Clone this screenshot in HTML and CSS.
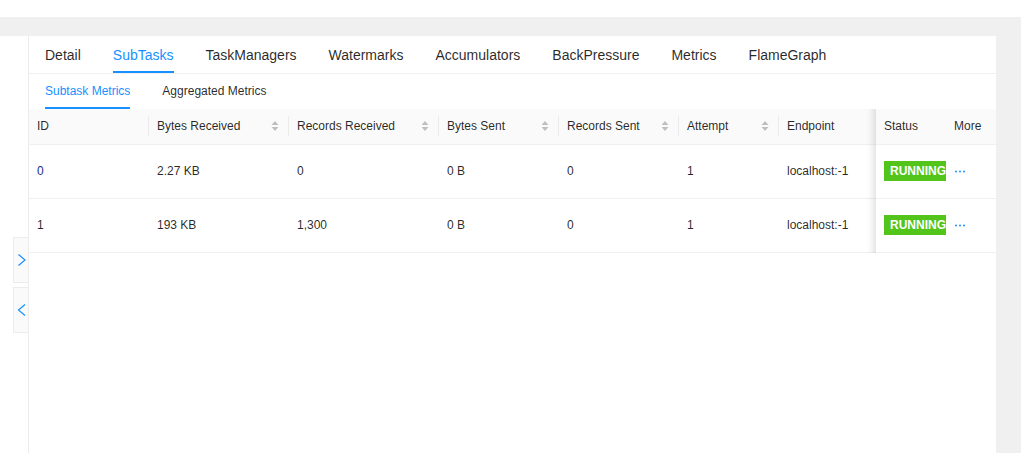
FILE: index.html
```html
<!DOCTYPE html>
<html>
<head>
<meta charset="utf-8">
<link rel="stylesheet" href="styles.css">
</head>
<body>
<div class="top"></div>
<div class="layout">
  <aside class="sider">
    <div class="sider-btns">
      <button class="collapse-btn" type="button">
        <svg width="10" height="14" viewBox="0 0 10 14"><path d="M1.5 1.5 L8 7 L1.5 12.5" fill="none" stroke="#1890ff" stroke-width="1.2"/></svg>
      </button>
      <button class="collapse-btn" type="button">
        <svg width="10" height="14" viewBox="0 0 10 14"><path d="M8 1.5 L1.5 7 L8 12.5" fill="none" stroke="#1890ff" stroke-width="1.2"/></svg>
      </button>
    </div>
  </aside>
  <main class="panel">
    <nav class="tabs">
      <span class="tab">Detail</span>
      <span class="tab active">SubTasks</span>
      <span class="tab">TaskManagers</span>
      <span class="tab">Watermarks</span>
      <span class="tab">Accumulators</span>
      <span class="tab">BackPressure</span>
      <span class="tab">Metrics</span>
      <span class="tab">FlameGraph</span>
    </nav>
    <nav class="subtabs">
      <span class="subtab active">Subtask Metrics</span>
      <span class="subtab">Aggregated Metrics</span>
    </nav>
    <table class="grid">
      <colgroup>
        <col class="w120"><col class="w140"><col class="w150"><col class="w120"><col class="w120"><col class="w100"><col class="w97"><col class="w70"><col class="w50">
      </colgroup>
      <thead>
        <tr>
          <th class="sep">ID</th>
          <th class="sep"><div class="sorter"><span>Bytes Received</span><svg class="caret" width="10" height="12" viewBox="0 0 10 12"><path d="M1.5 5 L5 1 L8.5 5 Z M1.5 7 L5 11 L8.5 7 Z" fill="#bfbfbf"/></svg></div></th>
          <th class="sep"><div class="sorter"><span>Records Received</span><svg class="caret" width="10" height="12" viewBox="0 0 10 12"><path d="M1.5 5 L5 1 L8.5 5 Z M1.5 7 L5 11 L8.5 7 Z" fill="#bfbfbf"/></svg></div></th>
          <th class="sep"><div class="sorter"><span>Bytes Sent</span><svg class="caret" width="10" height="12" viewBox="0 0 10 12"><path d="M1.5 5 L5 1 L8.5 5 Z M1.5 7 L5 11 L8.5 7 Z" fill="#bfbfbf"/></svg></div></th>
          <th class="sep"><div class="sorter"><span>Records Sent</span><svg class="caret" width="10" height="12" viewBox="0 0 10 12"><path d="M1.5 5 L5 1 L8.5 5 Z M1.5 7 L5 11 L8.5 7 Z" fill="#bfbfbf"/></svg></div></th>
          <th class="sep"><div class="sorter"><span>Attempt</span><svg class="caret" width="10" height="12" viewBox="0 0 10 12"><path d="M1.5 5 L5 1 L8.5 5 Z M1.5 7 L5 11 L8.5 7 Z" fill="#bfbfbf"/></svg></div></th>
          <th>Endpoint</th>
          <th class="fixed">Status</th>
          <th>More</th>
        </tr>
      </thead>
      <tbody>
        <tr>
          <td><a class="link">0</a></td>
          <td>2.27 KB</td>
          <td>0</td>
          <td>0 B</td>
          <td>0</td>
          <td>1</td>
          <td>localhost:-1</td>
          <td class="fixed"><span class="tag">RUNNING</span></td>
          <td><svg class="more" width="10" height="3" viewBox="0 0 10 3"><circle cx="1" cy="1.5" r="1" fill="#1890ff"/><circle cx="5" cy="1.5" r="1" fill="#1890ff"/><circle cx="9" cy="1.5" r="1" fill="#1890ff"/></svg></td>
        </tr>
        <tr>
          <td>1</td>
          <td>193 KB</td>
          <td>1,300</td>
          <td>0 B</td>
          <td>0</td>
          <td>1</td>
          <td>localhost:-1</td>
          <td class="fixed"><span class="tag">RUNNING</span></td>
          <td><svg class="more" width="10" height="3" viewBox="0 0 10 3"><circle cx="1" cy="1.5" r="1" fill="#1890ff"/><circle cx="5" cy="1.5" r="1" fill="#1890ff"/><circle cx="9" cy="1.5" r="1" fill="#1890ff"/></svg></td>
        </tr>
      </tbody>
    </table>
  </main>
</div>
</body>
</html>
```
FILE: styles.css
```css
* { box-sizing: border-box; }
html, body { margin: 0; padding: 0; }
body {
  font-family: "Liberation Sans", Arial, Helvetica, sans-serif;
  color: rgba(0,0,0,.85);
  background: #fff;
  width: 1021px;
  height: 453px;
  overflow: hidden;
}
.top { height: 17px; background: #fff; }
.layout {
  display: flex;
  background: #f0f0f0;
  padding-top: 19px;
  height: 436px;
}
.sider {
  width: 28px;
  flex: none;
  background: #fff;
}
.sider-btns {
  display: flex;
  flex-direction: column;
  align-items: flex-end;
  gap: 4px;
  margin-top: 201px;
}
.collapse-btn {
  width: 15px;
  height: 46px;
  padding: 0;
  margin: 0;
  background: #fafafa;
  border: 1px solid #ececec;
  border-right: none;
  display: flex;
  align-items: center;
  justify-content: center;
}
.collapse-btn svg { display: block; margin-left: 2px; }
.panel {
  width: 968px;
  flex: none;
  background: #fff;
  border-left: 1px solid #ececec;
}
.tabs {
  display: flex;
  padding-left: 16px;
  border-bottom: 1px solid #f0f0f0;
  height: 38px;
}
.tab {
  font-size: 14px;
  line-height: 18px;
  padding: 10px 0 7px;
  margin-right: 32px;
  border-bottom: 2px solid transparent;
  white-space: nowrap;
}
.tab.active { color: #1890ff; border-bottom-color: #1890ff; }
.subtabs {
  display: flex;
  padding-left: 16px;
  height: 35px;
}
.subtab {
  font-size: 12px;
  line-height: 18px;
  padding: 8px 0 7px;
  margin-right: 32px;
  border-bottom: 2px solid transparent;
  white-space: nowrap;
}
.subtab.active { color: #1890ff; border-bottom-color: #1890ff; }
.grid {
  border-collapse: collapse;
  table-layout: fixed;
  width: 967px;
  font-size: 12px;
}
.w120 { width: 120px; }
.w140 { width: 140px; }
.w150 { width: 150px; }
.w100 { width: 100px; }
.w97 { width: 97px; }
.w70 { width: 70px; }
.w50 { width: 50px; }
.grid th {
  background: #fafafa;
  font-weight: normal;
  text-align: left;
  padding: 8px;
  line-height: 18px;
  height: 35px;
  border-bottom: 1px solid #f0f0f0;
  position: relative;
  white-space: nowrap;
}
.grid th.sep::after {
  content: "";
  position: absolute;
  right: 0;
  top: 50%;
  width: 1px;
  height: 20px;
  margin-top: -10px;
  background: #ebebeb;
}
.sorter {
  display: flex;
  justify-content: space-between;
  align-items: center;
  padding-right: 1px;
}
.caret { display: block; }
.grid td {
  padding: 0 8px;
  height: 54px;
  line-height: 18px;
  border-bottom: 1px solid #f0f0f0;
  white-space: nowrap;
  overflow: hidden;
  vertical-align: middle;
}
.grid td.fixed, .grid th.fixed {
  position: relative;
  overflow: visible;
}
.grid .fixed::before {
  content: "";
  position: absolute;
  top: 0;
  bottom: -1px;
  left: -30px;
  width: 30px;
  box-shadow: inset -10px 0 8px -8px rgba(0,0,0,.15);
  pointer-events: none;
}
.grid td.fixed { padding-right: 0; }
.tag {
  display: inline-block;
  background: #52c41a;
  color: #fff;
  font-weight: bold;
  font-size: 12px;
  line-height: 20px;
  height: 20px;
  padding-left: 6px;
  width: 62px;
  overflow: hidden;
  white-space: nowrap;
  vertical-align: middle;
}
.link { color: #1d2e85; }
.more { display: block; margin-left: 1px; }
```
